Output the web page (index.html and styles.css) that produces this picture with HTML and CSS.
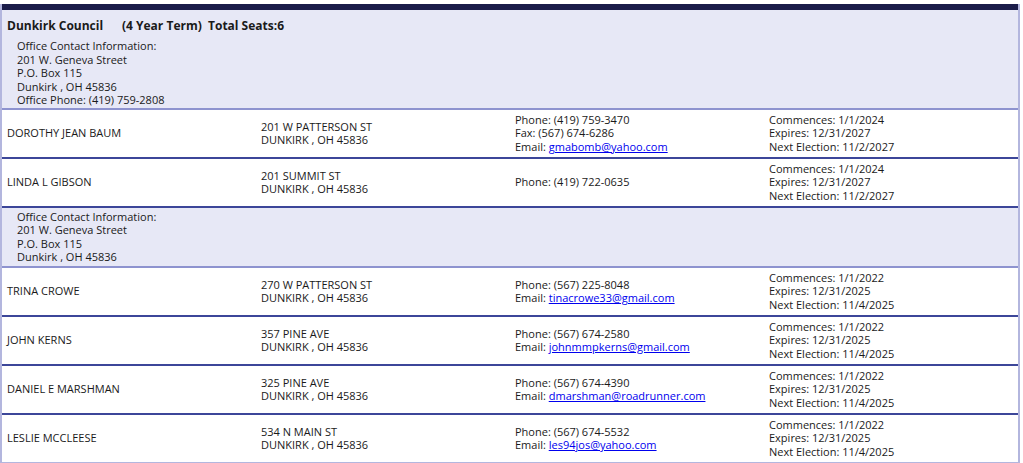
FILE: index.html
```html
<!DOCTYPE html>
<html>
<head>
<meta charset="utf-8">
<link rel="stylesheet" href="styles.css">
</head>
<body>
<div class="board">
  <div class="topbar"></div>
  <div class="office">
    <div class="title"><span class="t-name">Dunkirk Council</span><span class="t-term">(4 Year Term)</span><span class="t-seats">Total Seats:6</span></div>
    <div class="contact">
      <div>Office Contact Information:</div>
      <div>201 W. Geneva Street</div>
      <div>P.O. Box 115</div>
      <div>Dunkirk , OH 45836</div>
      <div>Office Phone: (419) 759-2808</div>
    </div>
  </div>
  <div class="row first">
    <div class="cell name">DOROTHY JEAN BAUM</div>
    <div class="cell"><div>201 W PATTERSON ST</div><div>DUNKIRK , OH 45836</div></div>
    <div class="cell"><div>Phone: (419) 759-3470</div><div>Fax: (567) 674-6286</div><div>Email: <a href="#">gmabomb@yahoo.com</a></div></div>
    <div class="cell"><div>Commences: 1/1/2024</div><div>Expires: 12/31/2027</div><div>Next Election: 11/2/2027</div></div>
  </div>
  <div class="row">
    <div class="cell name">LINDA L GIBSON</div>
    <div class="cell"><div>201 SUMMIT ST</div><div>DUNKIRK , OH 45836</div></div>
    <div class="cell"><div>Phone: (419) 722-0635</div></div>
    <div class="cell"><div>Commences: 1/1/2024</div><div>Expires: 12/31/2027</div><div>Next Election: 11/2/2027</div></div>
  </div>
  <div class="office mid">
    <div class="contact">
      <div>Office Contact Information:</div>
      <div>201 W. Geneva Street</div>
      <div>P.O. Box 115</div>
      <div>Dunkirk , OH 45836</div>
    </div>
  </div>
  <div class="row first">
    <div class="cell name">TRINA CROWE</div>
    <div class="cell"><div>270 W PATTERSON ST</div><div>DUNKIRK , OH 45836</div></div>
    <div class="cell"><div>Phone: (567) 225-8048</div><div>Email: <a href="#">tinacrowe33@gmail.com</a></div></div>
    <div class="cell"><div>Commences: 1/1/2022</div><div>Expires: 12/31/2025</div><div>Next Election: 11/4/2025</div></div>
  </div>
  <div class="row">
    <div class="cell name">JOHN KERNS</div>
    <div class="cell"><div>357 PINE AVE</div><div>DUNKIRK , OH 45836</div></div>
    <div class="cell"><div>Phone: (567) 674-2580</div><div>Email: <a href="#">johnmmpkerns@gmail.com</a></div></div>
    <div class="cell"><div>Commences: 1/1/2022</div><div>Expires: 12/31/2025</div><div>Next Election: 11/4/2025</div></div>
  </div>
  <div class="row">
    <div class="cell name">DANIEL E MARSHMAN</div>
    <div class="cell"><div>325 PINE AVE</div><div>DUNKIRK , OH 45836</div></div>
    <div class="cell"><div>Phone: (567) 674-4390</div><div>Email: <a href="#">dmarshman@roadrunner.com</a></div></div>
    <div class="cell"><div>Commences: 1/1/2022</div><div>Expires: 12/31/2025</div><div>Next Election: 11/4/2025</div></div>
  </div>
  <div class="row last">
    <div class="cell name">LESLIE MCCLEESE</div>
    <div class="cell"><div>534 N MAIN ST</div><div>DUNKIRK , OH 45836</div></div>
    <div class="cell"><div>Phone: (567) 674-5532</div><div>Email: <a href="#">les94jos@yahoo.com</a></div></div>
    <div class="cell"><div>Commences: 1/1/2022</div><div>Expires: 12/31/2025</div><div>Next Election: 11/4/2025</div></div>
  </div>
</div>
</body>
</html>
```
FILE: styles.css
```css
html, body {
  margin: 0;
  padding: 0;
  background: #ffffff;
}
body {
  padding: 4px 3px 0 0;
  font-family: "Open Sans", "Noto Sans", sans-serif;
  font-size: 11px;
  line-height: 13.5px;
  color: #1a1a1a;
}
.board {
  border-left: 2px solid #b3b6de;
  border-right: 2px solid #b3b6de;
  border-bottom: 2px solid #b3b6de;
}
.topbar {
  height: 6px;
  background: #1b1d4a;
}
.office {
  background: #e7e8f6;
  padding: 5px 5px 1px;
  border-bottom: 2px solid #8e93cf;
}
.office.mid {
  padding-top: 0;
  padding-bottom: 2px;
}
.title {
  font-weight: bold;
  font-size: 12px;
  line-height: 22px;
  display: flex;
}
.t-name { width: 115px; }
.t-term { width: 86px; }
.contact {
  padding-left: 10px;
  padding-top: 2px;
}
.row {
  display: grid;
  grid-template-columns: repeat(4, 1fr);
  align-items: center;
  min-height: 47px;
  border-bottom: 2px solid #3c4699;
}
.row.last {
  border-bottom: none;
}
.cell {
  padding: 3px 5px;
}
a {
  color: #0000ee;
}
```
